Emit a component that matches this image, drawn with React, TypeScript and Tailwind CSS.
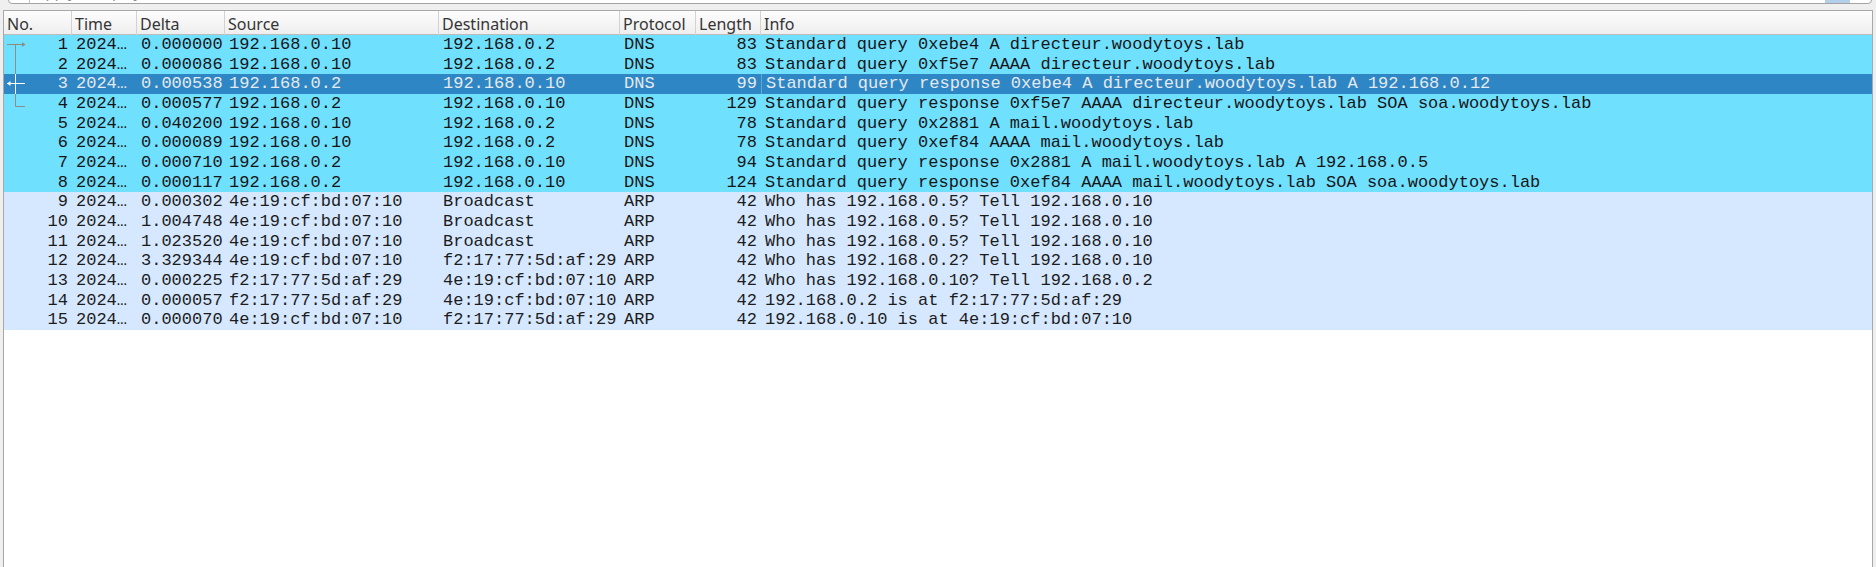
import React from 'react';

type Packet = {
  no: number;
  delta: string;
  src: string;
  dst: string;
  proto: 'DNS' | 'ARP';
  len: number;
  info: string;
};

const packets: Packet[] = [
  { no: 1, delta: '0.000000', src: '192.168.0.10', dst: '192.168.0.2', proto: 'DNS', len: 83, info: 'Standard query 0xebe4 A directeur.woodytoys.lab' },
  { no: 2, delta: '0.000086', src: '192.168.0.10', dst: '192.168.0.2', proto: 'DNS', len: 83, info: 'Standard query 0xf5e7 AAAA directeur.woodytoys.lab' },
  { no: 3, delta: '0.000538', src: '192.168.0.2', dst: '192.168.0.10', proto: 'DNS', len: 99, info: 'Standard query response 0xebe4 A directeur.woodytoys.lab A 192.168.0.12' },
  { no: 4, delta: '0.000577', src: '192.168.0.2', dst: '192.168.0.10', proto: 'DNS', len: 129, info: 'Standard query response 0xf5e7 AAAA directeur.woodytoys.lab SOA soa.woodytoys.lab' },
  { no: 5, delta: '0.040200', src: '192.168.0.10', dst: '192.168.0.2', proto: 'DNS', len: 78, info: 'Standard query 0x2881 A mail.woodytoys.lab' },
  { no: 6, delta: '0.000089', src: '192.168.0.10', dst: '192.168.0.2', proto: 'DNS', len: 78, info: 'Standard query 0xef84 AAAA mail.woodytoys.lab' },
  { no: 7, delta: '0.000710', src: '192.168.0.2', dst: '192.168.0.10', proto: 'DNS', len: 94, info: 'Standard query response 0x2881 A mail.woodytoys.lab A 192.168.0.5' },
  { no: 8, delta: '0.000117', src: '192.168.0.2', dst: '192.168.0.10', proto: 'DNS', len: 124, info: 'Standard query response 0xef84 AAAA mail.woodytoys.lab SOA soa.woodytoys.lab' },
  { no: 9, delta: '0.000302', src: '4e:19:cf:bd:07:10', dst: 'Broadcast', proto: 'ARP', len: 42, info: 'Who has 192.168.0.5? Tell 192.168.0.10' },
  { no: 10, delta: '1.004748', src: '4e:19:cf:bd:07:10', dst: 'Broadcast', proto: 'ARP', len: 42, info: 'Who has 192.168.0.5? Tell 192.168.0.10' },
  { no: 11, delta: '1.023520', src: '4e:19:cf:bd:07:10', dst: 'Broadcast', proto: 'ARP', len: 42, info: 'Who has 192.168.0.5? Tell 192.168.0.10' },
  { no: 12, delta: '3.329344', src: '4e:19:cf:bd:07:10', dst: 'f2:17:77:5d:af:29', proto: 'ARP', len: 42, info: 'Who has 192.168.0.2? Tell 192.168.0.10' },
  { no: 13, delta: '0.000225', src: 'f2:17:77:5d:af:29', dst: '4e:19:cf:bd:07:10', proto: 'ARP', len: 42, info: 'Who has 192.168.0.10? Tell 192.168.0.2' },
  { no: 14, delta: '0.000057', src: 'f2:17:77:5d:af:29', dst: '4e:19:cf:bd:07:10', proto: 'ARP', len: 42, info: '192.168.0.2 is at f2:17:77:5d:af:29' },
  { no: 15, delta: '0.000070', src: '4e:19:cf:bd:07:10', dst: 'f2:17:77:5d:af:29', proto: 'ARP', len: 42, info: '192.168.0.10 is at 4e:19:cf:bd:07:10' },
];

const SELECTED = 3;
const cols = 'grid grid-cols-[68px_65px_88px_214px_181px_76px_65px_1fr]';

// related-packet marks drawn in the No. column (frames 1..4 belong together)
function RelatedMark({ no, selected }: { no: number; selected: boolean }) {
  const c = selected ? '#ffffff' : '#8c8c8c';
  const mid = 10;
  if (no > 4) return null;
  return (
    <svg className="absolute left-0 top-0" width="26" height="20" viewBox="0 0 26 20" fill="none">
      {no === 1 && (
        <>
          <path d={`M11.5 ${mid}V20`} stroke={c} />
          <path d={`M3 ${mid - 0.5}H21`} stroke={c} />
          <path d={`M18 ${mid - 3}l3.5 2.5l-3.5 2.5z`} fill={c} />
        </>
      )}
      {no === 2 && <path d="M11.5 0V20" stroke={c} />}
      {no === 3 && (
        <>
          <path d="M11.5 0V20" stroke={c} />
          <path d={`M3 ${mid - 0.5}H21`} stroke={c} />
          <path d={`M6.5 ${mid - 3}l-3.5 2.5l3.5 2.5z`} fill={c} />
        </>
      )}
      {no === 4 && <path d={`M11.5 0V${mid + 2.5}H21`} stroke={c} />}
    </svg>
  );
}

function Row({ p }: { p: Packet }) {
  const sel = p.no === SELECTED;
  const bg = sel ? 'bg-[#2f86c4] text-[#e4eaef]' : p.proto === 'DNS' ? 'bg-[#70e0ff] text-[#161616]' : 'bg-[#d6e8ff] text-[#1c1c1c]';
  return (
    <div className={`${cols} ${bg} h-[19.67px] leading-[19.67px] whitespace-nowrap`}>
      <div className="relative pr-[4px] text-right">
        <RelatedMark no={p.no} selected={sel} />
        {p.no}
      </div>
      <div className="pl-[4px] overflow-hidden">2024…</div>
      <div className="pl-[4px] overflow-hidden">{p.delta}</div>
      <div className="pl-[4px] overflow-hidden">{p.src}</div>
      <div className="pl-[4px] overflow-hidden">{p.dst}</div>
      <div className="pl-[4px] overflow-hidden">{p.proto}</div>
      <div className="pr-[4px] text-right">{p.len}</div>
      <div className={`pl-[4px] overflow-hidden ${sel ? 'border-l border-[#62a6d6] pl-[3px]' : ''}`}>{p.info}</div>
    </div>
  );
}

const headers = ['No.', 'Time', 'Delta', 'Source', 'Destination', 'Protocol', 'Length', 'Info'];

export default function App() {
  return (
    <div className="w-[1876px] h-[567px] bg-[#efefef] flex flex-col overflow-hidden font-['Noto_Sans',sans-serif]">
      {/* display filter bar, scrolled mostly out of view */}
      <div className="h-[4px] pl-[8px] pr-[4px] flex items-end overflow-hidden">
        <div className="relative h-[24px] flex-1 bg-white border border-[#a3a3a3] rounded-[4px] flex items-stretch">
          <div className="w-[21px] border-r border-[#c4c4c4]" />
          <div className="flex-1 pl-[6px] text-[15px] leading-[20px] text-[#8d8d8d]">Apply a display filter … &lt;Ctrl-/&gt;</div>
          <div className="w-[25px] bg-[#b4cfea] mr-[21px]" />
        </div>
      </div>
      <div className="h-[6px] shrink-0" />

      {/* packet list, continues below the visible area */}
      <div className="flex-1 mx-[3px] -mb-[4px] border border-[#a8a8a8] bg-white flex flex-col">
        <div className={`${cols} h-[24px] bg-gradient-to-b from-[#fdfdfd] to-[#eeeeee] border-b border-[#bcbcbc] text-[16px] text-[#353535]`}>
          {headers.map((h, i) => (
            <div
              key={h}
              className={`pl-[3px] pt-[1px] flex items-center ${i < headers.length - 1 ? 'border-r border-[#d2d2d2]' : ''}`}
            >
              {h}
            </div>
          ))}
        </div>
        <div className="font-['Liberation_Mono',monospace] text-[17px]">
          {packets.map((p) => (
            <Row key={p.no} p={p} />
          ))}
        </div>
      </div>
    </div>
  );
}
